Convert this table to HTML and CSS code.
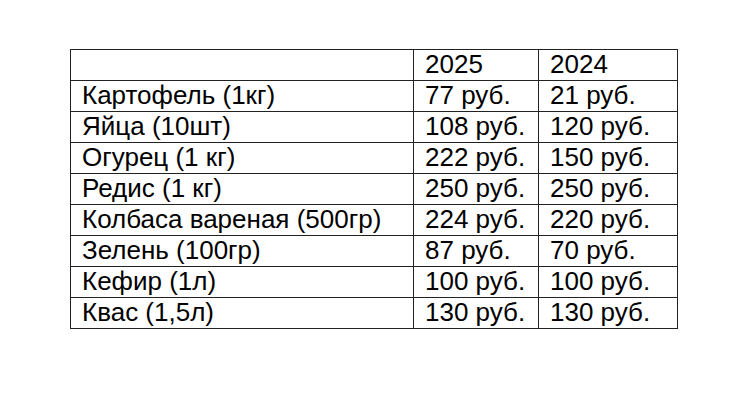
FILE: index.html
```html
<!DOCTYPE html>
<html lang="ru">
<head>
<meta charset="utf-8">
<title>Цены</title>
<link rel="stylesheet" href="styles.css">
</head>
<body>
<div class="page">
  <table class="prices">
    <tr><td class="name"></td><td class="c2">2025</td><td class="c3">2024</td></tr>
    <tr><td class="name">Картофель (1кг)</td><td class="c2">77 руб.</td><td class="c3">21 руб.</td></tr>
    <tr><td class="name">Яйца (10шт)</td><td class="c2">108 руб.</td><td class="c3">120 руб.</td></tr>
    <tr><td class="name">Огурец (1 кг)</td><td class="c2">222 руб.</td><td class="c3">150 руб.</td></tr>
    <tr><td class="name">Редис (1 кг)</td><td class="c2">250 руб.</td><td class="c3">250 руб.</td></tr>
    <tr><td class="name">Колбаса вареная (500гр)</td><td class="c2">224 руб.</td><td class="c3">220 руб.</td></tr>
    <tr><td class="name">Зелень (100гр)</td><td class="c2">87 руб.</td><td class="c3">70 руб.</td></tr>
    <tr><td class="name">Кефир (1л)</td><td class="c2">100 руб.</td><td class="c3">100 руб.</td></tr>
    <tr><td class="name">Квас (1,5л)</td><td class="c2">130 руб.</td><td class="c3">130 руб.</td></tr>
  </table>
</div>
</body>
</html>
```
FILE: styles.css
```css
html, body {
  margin: 0;
  padding: 0;
  background: #fff;
}
.page {
  padding: 49px 0 0 70px;
}
.prices {
  border-collapse: collapse;
  table-layout: fixed;
  width: 608px;
  font-family: "Liberation Sans", Arial, sans-serif;
  font-size: 26px;
  color: #000;
}
.prices td {
  border: 1px solid #222;
  height: 28px;
  padding: 0 0 2px 11px;
  line-height: 28px;
  white-space: nowrap;
  vertical-align: middle;
  overflow: hidden;
}
.name { width: 331px; }
.c2 { width: 113px; }
.c3 { width: 127px; }
```
